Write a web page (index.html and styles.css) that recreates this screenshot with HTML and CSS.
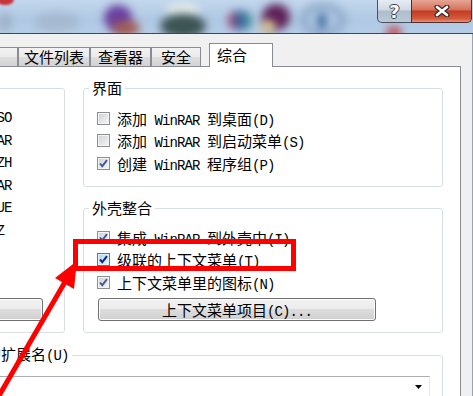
FILE: index.html
```html
<!DOCTYPE html>
<html lang="zh-CN">
<head>
  <meta charset="UTF-8" />
  <title>设置 - 综合</title>
  <link rel="stylesheet" href="styles.css">
</head>
<body>
  <div class="window">
    <div class="titlebar">
      <span class="blob blob-red"></span>
      <span class="blob blob-gray1"></span>
      <span class="blob blob-gray2"></span>
      <span class="blob blob-purple"></span>
      <span class="blob blob-brown"></span>
      <span class="blob blob-light"></span>
      <span class="blob blob-dark"></span>
      <span class="blob blob-multi"></span>
      <span class="blob blob-maroon"></span>
      <span class="blob blob-sand"></span>
      <span class="blob blob-ring"></span>
      <span class="blob blob-ringdot"></span>
      <span class="blob blob-red2"></span>

      <button class="cap-btn cap-help">?</button>
      <button class="cap-btn cap-close">
        <svg width="16" height="12" viewBox="0 0 16 12">
          <path d="M3 2 L13 10 M13 2 L3 10" stroke="#3b2a2a" stroke-width="5" stroke-linecap="round" fill="none"/>
          <path d="M3 2 L13 10 M13 2 L3 10" stroke="#fff" stroke-width="2.6" stroke-linecap="round" fill="none"/>
        </svg>
      </button>
    </div>

    <div class="frame">
      <div class="tabs">
        <div class="tab tab-path">路径</div>
        <div class="tab tab-list">文件列表</div>
        <div class="tab tab-viewer">查看器</div>
        <div class="tab tab-security">安全</div>
        <div class="tab tab-active">综合</div>
      </div>

      <div class="panel">
        <fieldset class="group group-assoc">
          <legend>关联 WinRAR</legend>
          <div class="assoc-grid">
            <div class="check"><span class="cb"></span><span class="en">RAR</span></div>
            <div class="check"><span class="cb"></span><span class="en">ZIP</span></div>
            <div class="check"><span class="cb"></span><span class="en">7Z</span></div>
            <div class="check"><span class="cb"></span><span class="en">ACE</span></div>
            <div class="check"><span class="cb"></span><span class="en">ARJ</span></div>
            <div class="check"><span class="cb"></span><span class="en">BZ2</span></div>
            <div class="check"><span class="cb"></span><span class="en">CAB</span></div>
            <div class="check"><span class="cb"></span><span class="en">GZ</span></div>
            <div class="check"><span class="cb"></span><span class="en">LZ</span></div>
            <div class="check"><span class="cb"></span><span class="en">Z</span></div>
            <div class="check"><span class="cb"></span><span class="en">ZIPX</span></div>
            <div class="check"><span class="cb"></span><span class="en">001</span></div>
            <div class="check"><span class="cb"></span><span class="en">ISO</span></div>
            <div class="check"><span class="cb"></span><span class="en">JAR</span></div>
            <div class="check"><span class="cb"></span><span class="en">LZH</span></div>
            <div class="check"><span class="cb"></span><span class="en">TAR</span></div>
            <div class="check"><span class="cb"></span><span class="en">UUE</span></div>
            <div class="check"><span class="cb"></span><span class="en">XZ</span></div>
          </div>
          <button class="btn btn-toggle">全部切换<span class="en">(A)</span></button>
        </fieldset>

        <fieldset class="group group-ui">
          <legend>界面</legend>
          <div class="rows">
            <div class="check"><span class="cb"></span><span>添加<span class="en"> WinRAR </span>到桌面<span class="en">(D)</span></span></div>
            <div class="check"><span class="cb"></span><span>添加<span class="en"> WinRAR </span>到启动菜单<span class="en">(S)</span></span></div>
            <div class="check">
              <span class="cb"><svg width="11" height="11" viewBox="0 0 11 11"><path d="M2 5.5 L4.3 8.2 L9 2.2" fill="none" stroke="#40599a" stroke-width="1.9"/></svg></span>
              <span>创建<span class="en"> WinRAR </span>程序组<span class="en">(P)</span></span>
            </div>
          </div>
        </fieldset>

        <fieldset class="group group-shell">
          <legend>外壳整合</legend>
          <div class="rows">
            <div class="check">
              <span class="cb"><svg width="11" height="11" viewBox="0 0 11 11"><path d="M2 5.5 L4.3 8.2 L9 2.2" fill="none" stroke="#40599a" stroke-width="1.9"/></svg></span>
              <span>集成<span class="en"> WinRAR </span>到外壳中<span class="en">(I)</span></span>
            </div>
            <div class="check">
              <span class="cb cb-hot"><svg width="11" height="11" viewBox="0 0 11 11"><path d="M2 5.5 L4.3 8.2 L9 2.2" fill="none" stroke="#13277a" stroke-width="2"/></svg></span>
              <span>级联的上下文菜单<span class="en">(T)</span></span>
            </div>
            <div class="check">
              <span class="cb"><svg width="11" height="11" viewBox="0 0 11 11"><path d="M2 5.5 L4.3 8.2 L9 2.2" fill="none" stroke="#40599a" stroke-width="1.9"/></svg></span>
              <span>上下文菜单里的图标<span class="en">(N)</span></span>
            </div>
          </div>
          <button class="btn btn-menu">上下文菜单项目<span class="en">(C)...</span></button>
        </fieldset>

        <fieldset class="group group-ext">
          <legend>用户定义的扩展名<span class="en">(U)</span></legend>
          <div class="combo">
            <svg class="combo-arrow" width="7" height="4" viewBox="0 0 7 4"><polygon points="0,0 7,0 3.5,4" fill="#000"/></svg>
          </div>
        </fieldset>
      </div>
    </div>

    <svg class="annotation" width="473" height="396" viewBox="0 0 473 396">
      <rect x="75.5" y="241.5" width="218" height="27" fill="none" stroke="#ff0000" stroke-width="5"/>
      <line x1="65" y1="282" x2="-4" y2="401" stroke="#ff0000" stroke-width="5"/>
      <polygon points="77,261 55,278 74,289" fill="#ff0000"/>
    </svg>
  </div>
</body>
</html>
```

FILE: styles.css
```css
body {
  margin: 0;
  font-family: "Noto Sans CJK SC", "Liberation Sans", sans-serif;
  font-size: 15px;
  color: #000;
  background-color: #f0f0f0;
  overflow: hidden;
}

.window {
  position: relative;
  width: 473px;
  height: 396px;
  overflow: hidden;
  background-color: #f0f0f0;
}

/* blurred aero glass */
.titlebar {
  position: relative;
  height: 33px;
  border-bottom: 1px solid #394757;
  background: linear-gradient(#c3d7ed, #afc8e4 60%, #b6cde7);
  display: flex;
  justify-content: flex-end;
  align-items: flex-start;
  padding-right: 1px;
  overflow: hidden;
}

.blob {
  position: absolute;
  border-radius: 50%;
  filter: blur(4px);
}

.blob-red { left: -4px; top: -6px; width: 18px; height: 11px; background: #c9323c; filter: blur(1px); }
.blob-gray1 { left: -2px; top: 12px; width: 14px; height: 20px; background: #8c9bab; opacity: 0.5; }
.blob-gray2 { left: 34px; top: 12px; width: 46px; height: 20px; background: #98a8b9; opacity: 0.45; }
.blob-purple { left: 104px; top: 5px; width: 28px; height: 26px; background: #6a3f9e; }
.blob-brown { left: 112px; top: 21px; width: 28px; height: 14px; background: #a15a4e; }
.blob-light { left: 166px; top: 3px; width: 34px; height: 16px; background: #e4ece8; }
.blob-dark { left: 160px; top: 14px; width: 46px; height: 24px; background: #3d5454; }
.blob-multi { left: 228px; top: 11px; width: 24px; height: 19px; border-radius: 40%; background: linear-gradient(90deg, #c24263, #3263a3, #4fa08f); }
.blob-maroon { left: 262px; top: 4px; width: 28px; height: 26px; background: #5e2058; }
.blob-sand { left: 260px; top: 20px; width: 16px; height: 13px; background: #d8c88e; }
.blob-ring { left: 300px; top: 3px; width: 32px; height: 20px; border: 7px solid #8ea9c9; background: transparent; }
.blob-ringdot { left: 318px; top: 12px; width: 8px; height: 18px; background: #2f5f95; }
.blob-red2 { left: 386px; top: 27px; width: 16px; height: 10px; background: #c44040; }

.cap-btn {
  position: relative;
  height: 23px;
  padding: 0;
  box-sizing: border-box;
  border: 1px solid #46525f;
  border-top: none;
  display: flex;
  align-items: center;
  justify-content: center;
}

.cap-help {
  width: 35px;
  border-radius: 0 0 0 5px;
  background: linear-gradient(#e6ecf3, #cfd9e4 45%, #aebccb 50%, #bccad8);
  font-family: "DejaVu Sans", sans-serif;
  font-weight: bold;
  font-size: 18px;
  line-height: 21px;
  color: #fff;
  text-shadow: 1px 0 #3b4552, -1px 0 #3b4552, 0 1px #3b4552, 0 -1px #3b4552;
}

.cap-close {
  width: 61px;
  margin-left: -1px;
  border-color: #4d2e2a;
  border-radius: 0 0 5px 0;
  background: linear-gradient(#e7a595, #d6705c 45%, #c13b21 50%, #d55a3c 85%, #e69480);
}

.cap-close svg {
  display: block;
}

/* dialog body */
.frame {
  padding: 9px 11px 0 0;
  border-right: 1px solid #9ba3ad;
  height: 362px;
  box-sizing: border-box;
}

.tabs {
  display: flex;
  align-items: flex-end;
  height: 23px;
  margin-left: -50px;
}

.tab {
  position: relative;
  box-sizing: border-box;
  height: 19px;
  border: 1px solid #898c95;
  border-bottom: none;
  background: linear-gradient(#f3f3f3, #ebebeb 50%, #dedede 50%, #d2d2d2);
  line-height: 18px;
  text-align: center;
  white-space: nowrap;
}

.tab-path { width: 68px; }
.tab-list { width: 72px; }
.tab-viewer { width: 61px; }
.tab-security { width: 50px; }

.tab-active {
  z-index: 1;
  width: 64px;
  height: 24px;
  margin-left: 8px;
  margin-bottom: -1px;
  background: #fff;
  line-height: 21px;
  text-align: left;
  padding-left: 7px;
}

.panel {
  margin-left: -200px;
  height: 340px;
  box-sizing: border-box;
  background-color: #fff;
  border: 1px solid #898c95;
  padding: 12px 17px 0 13px;
  display: grid;
  grid-template-columns: 251px 360px;
  column-gap: 18px;
  row-gap: 12px;
  align-items: start;
}

.group {
  margin: 0;
  padding: 10px 0 11px;
  min-width: 0;
  border: 1px solid #d5dfe5;
  border-radius: 3px;
}

.group legend {
  margin-left: 5px;
  padding: 0 3px;
  line-height: 18px;
  white-space: nowrap;
}

.group-assoc {
  grid-column: 1;
  grid-row: 1 / span 2;
  align-self: stretch;
  display: flex;
  flex-direction: column;
}

.group-ui {
  grid-column: 2;
  grid-row: 1;
  padding-bottom: 11.5px;
}

.group-shell {
  grid-column: 2;
  grid-row: 2;
  padding-top: 9px;
}

.group-ext {
  grid-column: 1 / span 2;
  grid-row: 3;
  padding: 0 0 20px;
}

.group-ext legend {
  margin-left: 108px;
}

.assoc-grid {
  display: grid;
  grid-template-columns: repeat(3, 46px);
  grid-template-rows: repeat(6, 22.5px);
  grid-auto-flow: column;
  padding-left: 62px;
}

.rows {
  padding-left: 13px;
}

.check {
  display: flex;
  align-items: center;
  gap: 7px;
  height: 22.5px;
  white-space: nowrap;
}

.en {
  font-family: "Liberation Mono", monospace;
  font-size: 14px;
  letter-spacing: -0.9px;
  white-space: pre;
}

.cb {
  flex: none;
  width: 13px;
  height: 13px;
  box-sizing: border-box;
  border: 1px solid #8e8f8f;
  background: linear-gradient(135deg, #cdd0d4, #f7f7f7);
  box-shadow: inset 0 0 0 1px #f4f4f4;
}

.cb svg {
  display: block;
}

.cb-hot {
  border-color: #3c7fb1;
  background: linear-gradient(135deg, #b3d4ef, #eaf6fd);
  box-shadow: inset 0 0 0 1px #def4fc;
}

.btn {
  height: 23px;
  box-sizing: border-box;
  padding: 0;
  border: 1px solid #707070;
  border-radius: 3px;
  background: linear-gradient(#f2f2f2, #ebebeb 50%, #dddddd 50%, #cfcfcf);
  box-shadow: inset 0 0 0 1px #fbfbfb;
  font: inherit;
  line-height: 21px;
  color: #000;
  white-space: nowrap;
}

.btn-toggle {
  margin-top: auto;
  margin-left: 16px;
  width: 212px;
}

.btn-menu {
  display: block;
  margin: 4.5px 0 0 14px;
  width: 278px;
}

.combo {
  height: 21px;
  margin: 11px 12px 0 16px;
  box-sizing: border-box;
  border: 1px solid;
  border-color: #abadb3 #e3e9ef #e3e9ef #e2e3ea;
  background-color: #fff;
  display: flex;
  justify-content: flex-end;
  align-items: center;
  padding-right: 7px;
}

.combo-arrow {
  display: block;
}

.annotation {
  position: absolute;
  left: 0;
  top: 0;
  pointer-events: none;
}
```
